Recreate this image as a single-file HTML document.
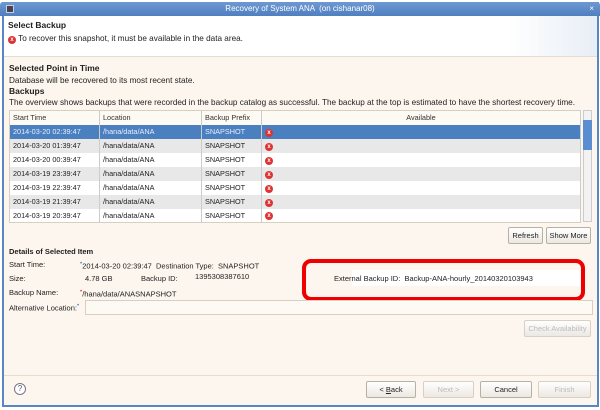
<!DOCTYPE html>
<html><head><style>
*{margin:0;padding:0;box-sizing:border-box}
body{width:600px;height:410px;overflow:hidden;background:#fff;font-family:"Liberation Sans",sans-serif;font-size:8px;color:#222;position:relative}
.a{position:absolute;white-space:nowrap}
.win{position:absolute;left:2px;top:2px;width:597px;height:405px;border:2px solid #5b86c4;border-top:none;background:#fdf6ee}
.title{position:absolute;left:0;top:2px;width:600px;height:14px;background:linear-gradient(#6e98d2,#4f7fc0);color:#fff;text-align:center;font-size:8px;line-height:14px;border-radius:3px 3px 0 0}
.head{position:absolute;left:4px;top:16px;width:593px;height:41px;background:linear-gradient(90deg,#fff 85%,#e8eef6);border-bottom:1px solid #e6dccf}
.err{display:inline-block;width:8px;height:8px;border-radius:50%;background:#d33;color:#fff;font-size:6px;line-height:8px;text-align:center;font-weight:bold}
table{border-collapse:collapse;position:absolute;left:9px;top:110px;width:572px;background:#fff;border:1px solid #d8cfc2}
td{height:14px;padding:0 3px;font-size:7.3px;border-right:1px solid #ccc}
tr.h td{background:#fdf9f3;color:#333;height:14px}
tr.g td{background:#e8e8e8}
tr.s td{background:#4a7fc0;color:#e8eefa}
.btn{position:absolute;border:1px solid #b7b0a5;border-radius:2px;background:linear-gradient(#fff,#ece8e2);font-size:7.5px;text-align:center;line-height:15px;height:17px}
.dis{color:#bbb;border-color:#d8d0c5}
.t{font-size:8.2px}
</style></head><body>
<div class="win"></div>
<div class="title">Recovery of System ANA &nbsp;(on cishanar08)<span style="position:absolute;right:6px">×</span><span style="position:absolute;left:6px;top:3px;width:8px;height:8px;background:#445;border:1px solid #ccd"></span></div>
<div class="head"></div>
<div class="a" style="left:8px;top:20px;font-weight:bold;font-size:8.5px">Select Backup</div>
<div class="a t" style="left:8px;top:34px"><span class="err">x</span> To recover this snapshot, it must be available in the data area.</div>
<div class="a" style="left:9px;top:63px;font-weight:bold;font-size:8.5px">Selected Point in Time</div>
<div class="a t" style="left:9px;top:76px">Database will be recovered to its most recent state.</div>
<div class="a" style="left:9px;top:86px;font-weight:bold;font-size:8.5px">Backups</div>
<div class="a t" style="left:9px;top:98px">The overview shows backups that were recorded in the backup catalog as successful. The backup at the top is estimated to have the shortest recovery time.</div>
<table>
<tr class="h"><td style="width:90px">Start Time</td><td style="width:102px">Location</td><td style="width:60px">Backup Prefix</td><td style="text-align:center">Available</td></tr>
<tr class="s"><td>2014-03-20 02:39:47</td><td>/hana/data/ANA</td><td>SNAPSHOT</td><td><span class="err">x</span></td></tr>
<tr class="g"><td>2014-03-20 01:39:47</td><td>/hana/data/ANA</td><td>SNAPSHOT</td><td><span class="err">x</span></td></tr>
<tr><td>2014-03-20 00:39:47</td><td>/hana/data/ANA</td><td>SNAPSHOT</td><td><span class="err">x</span></td></tr>
<tr class="g"><td>2014-03-19 23:39:47</td><td>/hana/data/ANA</td><td>SNAPSHOT</td><td><span class="err">x</span></td></tr>
<tr><td>2014-03-19 22:39:47</td><td>/hana/data/ANA</td><td>SNAPSHOT</td><td><span class="err">x</span></td></tr>
<tr class="g"><td>2014-03-19 21:39:47</td><td>/hana/data/ANA</td><td>SNAPSHOT</td><td><span class="err">x</span></td></tr>
<tr><td>2014-03-19 20:39:47</td><td>/hana/data/ANA</td><td>SNAPSHOT</td><td><span class="err">x</span></td></tr>
</table>
<div class="a" style="left:583px;top:110px;width:9px;height:112px;background:#f2f2f2;border:1px solid #ccc"></div>
<div class="a" style="left:583px;top:120px;width:9px;height:30px;background:#5a8ed0"></div>
<div class="btn" style="left:508px;top:227px;width:35px">Refresh</div>
<div class="btn" style="left:546px;top:227px;width:45px">Show More</div>
<div class="a" style="left:9px;top:247px;font-weight:bold;font-size:7.5px">Details of Selected Item</div>
<div class="a" style="left:9px;top:260px;font-size:7.5px">Start Time:</div>
<div class="a" style="left:80px;top:260px;font-size:7.5px"><sup style="color:#48c">•</sup>2014-03-20 02:39:47 &nbsp;Destination Type: &nbsp;SNAPSHOT</div>
<div class="a" style="left:9px;top:274px;font-size:7.5px">Size:</div>
<div class="a" style="left:85px;top:274px;font-size:7.5px">4.78 GB</div>
<div class="a" style="left:141px;top:274px;font-size:7.5px">Backup ID:</div>
<div class="a" style="left:195px;top:272px;font-size:7.5px">1395308387610</div>
<div class="a" style="left:9px;top:288px;font-size:7.5px">Backup Name:</div>
<div class="a" style="left:80px;top:288px;font-size:7.5px"><sup style="color:#d44">•</sup>/hana/data/ANASNAPSHOT</div>
<div class="a" style="left:352px;top:270px;width:228px;height:16px;background:#fff"></div>
<div class="a" style="left:334px;top:274px;font-size:7.5px">External Backup ID: &nbsp;Backup-ANA-hourly_20140320103943</div>
<div class="a" style="left:302px;top:259px;width:283px;height:42px;border:4px solid #e00;border-radius:9px"></div>
<div class="a" style="left:9px;top:302px;font-size:7.5px">Alternative Location:<sup style="color:#48c">•</sup></div>
<div class="a" style="left:85px;top:300px;width:508px;height:15px;border:1px solid #d8cfc2;background:#fdf9f3"></div>
<div class="btn dis" style="left:524px;top:320px;width:67px">Check Availability</div>
<div class="a" style="left:4px;top:375px;width:593px;height:1px;background:#e6dccf"></div>
<div class="a" style="left:14px;top:383px;width:12px;height:12px;border:1px solid #778;border-radius:50%;text-align:center;line-height:10px;color:#556;font-size:8px;background:#fff">?</div>
<div class="btn" style="left:366px;top:381px;width:50px">&lt; <u>B</u>ack</div>
<div class="btn dis" style="left:423px;top:381px;width:51px">Next &gt;</div>
<div class="btn" style="left:480px;top:381px;width:52px">Cancel</div>
<div class="btn dis" style="left:538px;top:381px;width:53px">Finish</div>
</body></html>
